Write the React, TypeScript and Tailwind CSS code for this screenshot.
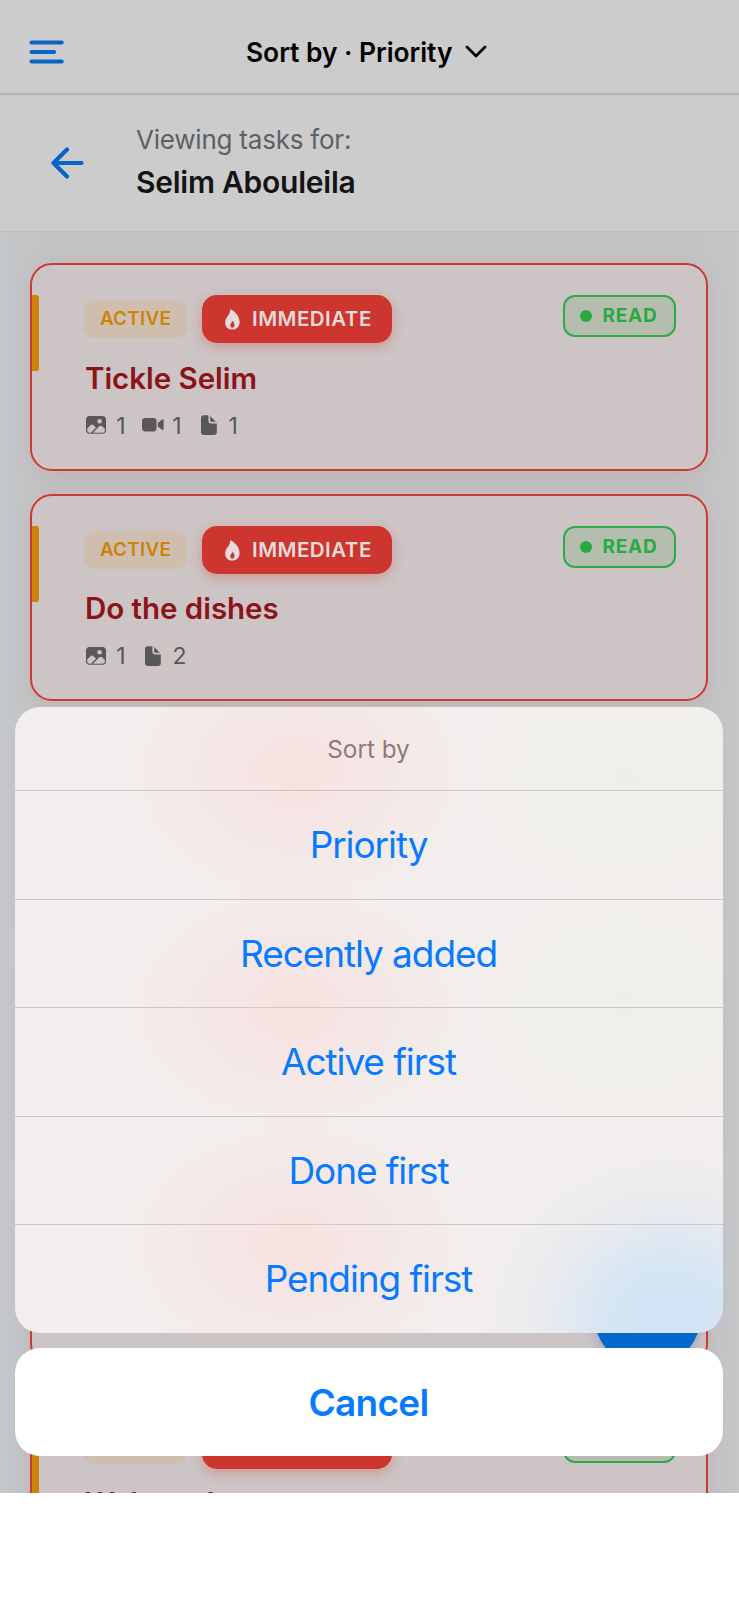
import React from "react";

type Task = { title: string; images?: number; videos?: number; files?: number };

const tasks: Task[] = [
  { title: "Tickle Selim", images: 1, videos: 1, files: 1 },
  { title: "Do the dishes", images: 1, files: 2 },
  { title: "Water plants", images: 1 },
  { title: "Buy milk", images: 1 },
  { title: "Call home" },
  { title: "Wake pal" },
];

const options = ["Priority", "Recently added", "Active first", "Done first", "Pending first"];

function ImageIcon() {
  return (
    <svg width="20" height="18" viewBox="0 0 20 18" className="block">
      <rect x="0" y="0" width="20" height="17.8" rx="3.8" fill="#585858" />
      <circle cx="13.6" cy="5.2" r="2.3" fill="#cdc4c5" />
      <path d="M1.2 12.4 L4.4 9.2 Q6 7.6 7.6 9.2 L10 11.4 L5 16.7 H3.6 Q1.2 16.7 1.2 14.3Z" fill="#cdc4c5" />
      <path d="M6.9 16.7 L13 10.6 Q14.6 9.2 16.2 10.5 L18.8 12.8 V14 Q18.8 16.7 16.2 16.7Z" fill="#cdc4c5" />
    </svg>
  );
}

function VideoIcon() {
  return (
    <svg width="22" height="14" viewBox="0 0 22 14" className="block">
      <rect x="0" y="0" width="14.6" height="13.4" rx="3.4" fill="#585858" />
      <path d="M15.8 5 L20 1.6 Q21.6 0.7 21.6 2.3 V11 Q21.6 12.7 20 11.7 L15.8 8.4Z" fill="#585858" />
    </svg>
  );
}

function FileIcon() {
  return (
    <svg width="16" height="20" viewBox="0 0 16 20" className="block">
      <path d="M7.4 0.2 V6 Q7.4 8.4 9.8 8.4 H15.8 V17 Q15.8 20 12.8 20 H3 Q0 20 0 17 V3.2 Q0 0.2 3 0.2Z" fill="#585858" />
      <path d="M9.2 0.9 L14.9 6.8 H10.2 Q9.2 6.8 9.2 5.8Z" fill="#585858" />
    </svg>
  );
}

function FlameIcon() {
  return (
    <svg width="15" height="21" viewBox="0 0 15 21" className="block">
      <path
        fillRule="evenodd"
        d="M5.2 0.3 C10.2 2.2 14.6 7.6 14.6 13 C14.6 17.8 11.6 20.6 7.3 20.6 C3 20.6 0.2 17.6 0.2 13.4 C0.2 10.2 1.8 8.4 3.2 6.6 C4.6 4.6 5.1 2.6 5.2 0.3Z M7.7 11.8 C7.3 13.1 5.3 14.2 5.3 16.2 C5.3 17.8 6.2 18.7 7.4 18.7 C8.6 18.7 9.5 17.8 9.5 16.1 C9.5 14.3 8.6 12.9 7.7 11.8Z"
        fill="#e5dbdb"
      />
    </svg>
  );
}

function TaskCard({ task }: { task: Task }) {
  const hasMeta = task.images || task.videos || task.files;
  return (
    <article
      className={`relative shrink-0 rounded-[22px] border-2 border-[#cb3a33] bg-[#cdc4c5] shadow-[0_6px_22px_rgba(170,110,105,0.17)] ${
        hasMeta ? "h-[207.5px]" : "h-[180.5px]"
      }`}
    >
      <div className="absolute left-0 top-[30px] h-[76px] w-[7.5px] rounded-r-[3px] bg-[#cd8208]" />
      <div className="flex items-start pl-[52.5px] pr-[30px] pt-[30px]">
        <span className="mt-[5px] flex h-[38px] w-[103px] items-center justify-center rounded-[11px] bg-[#cfbdae] pt-px text-[18.8px] font-semibold tracking-[0.3px] text-[#cb8308]">
          ACTIVE
        </span>
        <span className="ml-[15px] flex h-12 w-[190px] items-center rounded-[15px] bg-[#cd362f] pl-[23px] pt-px text-[20.5px] font-semibold tracking-[0.48px] text-[#e5dbdb] shadow-[0_4px_12px_rgba(205,54,47,0.3)]">
          <FlameIcon />
          <span className="ml-[12px]">IMMEDIATE</span>
        </span>
        <span className="ml-auto flex h-[42px] w-[113px] items-center rounded-[12px] border-2 border-[#2dab48] bg-[#b5bdae] pl-[15px] text-[19px] font-bold tracking-[0.8px] text-[#29a942]">
          <span className="mr-[11px] h-3 w-3 rounded-full bg-[#29a942]" />
          <span className="pt-px">READ</span>
        </span>
      </div>
      <h2 className="mt-[16.5px] pl-[53.5px] text-[29.5px] font-semibold leading-[36px] tracking-[-0.04px] text-[#8c1418]">{task.title}</h2>
      {hasMeta && (
        <div className="mt-[14.5px] flex h-[30px] items-center pl-[54px] text-[23px] leading-[30px] text-[#585858]">
          {task.images && (
            <span className="mr-[16px] flex w-[40px] items-center justify-between">
              <ImageIcon />
              <span className="pt-px">{task.images}</span>
            </span>
          )}
          {task.videos && (
            <span className="mr-[16px] flex w-[40px] items-center justify-between">
              <VideoIcon />
              <span className="pt-px">{task.videos}</span>
            </span>
          )}
          {task.files && (
            <span className="ml-[3px] flex items-center gap-[12px]">
              <FileIcon />
              <span className="pt-px">{task.files}</span>
            </span>
          )}
        </div>
      )}
    </article>
  );
}

export default function App() {
  return (
    <div className="h-[1600px] w-[739px] overflow-hidden bg-white font-['Inter','Liberation_Sans',sans-serif]">
      <div className="relative flex h-[1493px] flex-col overflow-hidden bg-[#c5c7c9]">
        <header className="flex h-[95px] shrink-0 items-center border-b-2 border-[#b3b3b3] bg-[#cccccc] pl-[29px] pt-[10px]">
          <svg width="36" height="26" viewBox="0 0 36 26" className="block">
            <path d="M2.4 3.5H32.8M2.4 13H25.2M2.4 22.5H32.8" stroke="#0864ca" strokeWidth="3.8" strokeLinecap="round" />
          </svg>
          <span className="ml-[181px] whitespace-nowrap pt-[2px] text-[26.4px] font-semibold tracking-[-0.04px] text-black">Sort by · Priority</span>
          <svg width="22" height="14" viewBox="0 0 22 14" className="ml-[13px] block">
            <path d="M2 2L11 11L20 2" fill="none" stroke="#000" strokeWidth="2.8" strokeLinecap="round" strokeLinejoin="round" />
          </svg>
        </header>
        <section className="flex h-[137px] shrink-0 items-center border-b border-[#bcbdc0] bg-[#cccccc] pl-[51px]">
          <svg width="33" height="32" viewBox="0 0 33 32" className="block">
            <path d="M16 2.5L2.5 16L16 29.5M3 16H30.5" fill="none" stroke="#0864ca" strokeWidth="4.2" strokeLinecap="round" strokeLinejoin="round" />
          </svg>
          <div className="-mt-[4px] ml-[52px]">
            <p className="text-[26px] leading-[34px] tracking-[-0.22px] text-[#5b6166]">Viewing tasks for:</p>
            <p className="mt-[7px] text-[30px] font-semibold leading-[36px] tracking-[-0.25px] text-[#141414]">Selim Abouleila</p>
          </div>
        </section>
        <main className="flex flex-col gap-[23px] bg-[linear-gradient(90deg,#c4c7c9,#c3c2c4_8%,#c3c2c4_92%,#c4c6c8)] pl-[29.5px] pr-[31.5px] pt-[31px]">
          {tasks.map((t) => (
            <TaskCard key={t.title} task={t} />
          ))}
        </main>
        <div className="absolute left-[594px] top-[1261px] h-[107px] w-[107px] rounded-full bg-[#0568cf] shadow-[0_4px_12px_rgba(5,80,160,0.25)]" />
        <div className="absolute bottom-[37px] left-[14.5px] flex w-[708px] flex-col gap-[15px]">
          <div className="relative flex h-[626px] flex-col overflow-hidden rounded-[25px] bg-[#f2eeed] bg-[radial-gradient(ellipse_190px_180px_at_655px_620px,#d0e4f8,rgba(210,228,245,0.85)_35%,rgba(218,230,240,0.4)_65%,rgba(228,234,238,0)),radial-gradient(ellipse_180px_140px_at_282px_66px,rgba(248,223,222,0.9),rgba(246,226,225,0.5)_50%,rgba(244,232,231,0)),radial-gradient(ellipse_180px_130px_at_280px_300px,rgba(248,223,222,0.9),rgba(246,226,225,0.5)_50%,rgba(244,232,231,0)),radial-gradient(ellipse_180px_130px_at_280px_536px,rgba(248,223,222,0.9),rgba(246,226,225,0.5)_50%,rgba(244,232,231,0)),radial-gradient(ellipse_160px_130px_at_610px_70px,#eeefea,rgba(240,238,235,0)),radial-gradient(ellipse_160px_130px_at_610px_298px,#eeefea,rgba(240,238,235,0))]">
            <div className="flex h-[84px] shrink-0 items-center justify-center border-b border-[#cdc8c8] pt-px text-[24.3px] text-[#8e7a7d]">Sort by</div>
            {options.map((label) => (
              <button
                key={label}
                className="flex w-full flex-1 items-center justify-center border-b border-[#cdc8c8] text-[37px] tracking-[-1.08px] text-[#087aff] last:border-b-0"
              >
                {label}
              </button>
            ))}
          </div>
          <button className="flex h-[108px] items-center justify-center rounded-[25px] bg-white pt-px text-[37px] font-semibold tracking-[-0.7px] text-[#087aff]">
            Cancel
          </button>
        </div>
      </div>
    </div>
  );
}
